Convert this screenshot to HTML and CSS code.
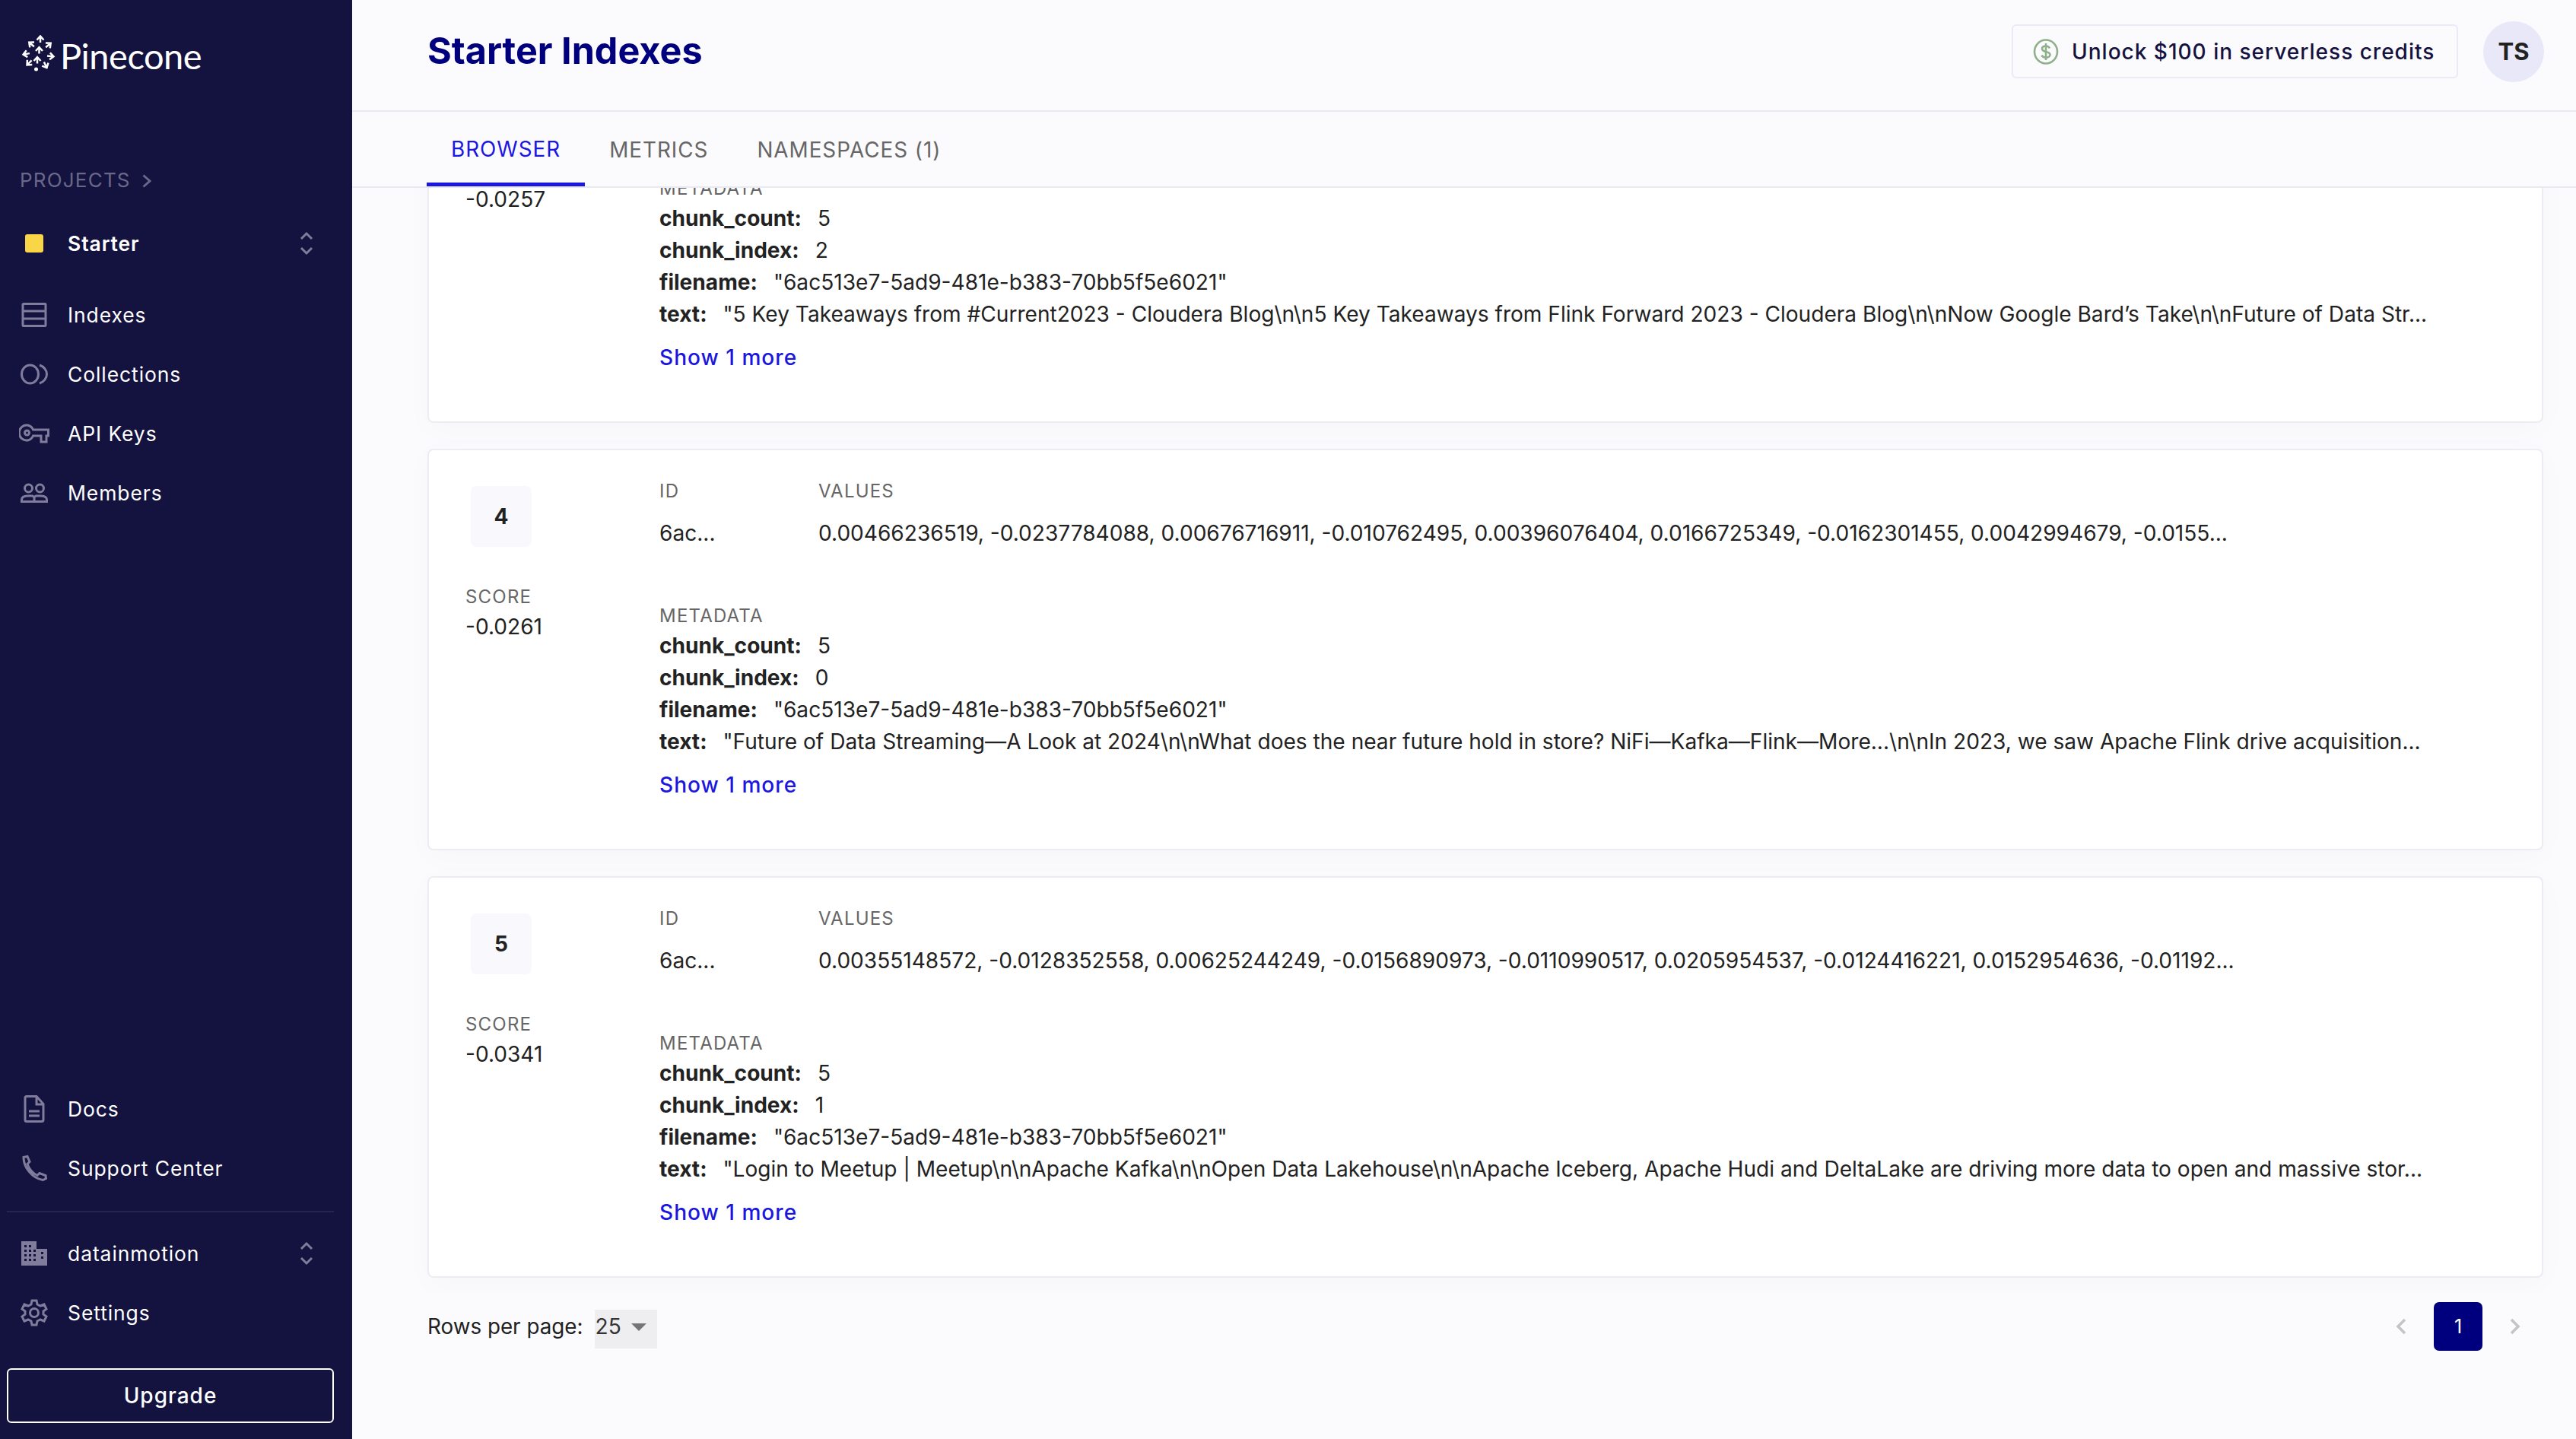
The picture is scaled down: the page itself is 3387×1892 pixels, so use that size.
FILE: index.html
```html
<!DOCTYPE html>
<html lang="en">

<head>
    <meta charset="UTF-8">
    <title>Starter Indexes</title>
    <link rel="stylesheet" href="styles.css">
</head>

<body>
    <aside class="sidebar">
        <div class="logo">
            <svg class="logo-mark" viewBox="8 10 46 50">
                <defs>
                    <path id="arr" d="M-4.5 1.5L0-3.5 4.5 1.5M0-3V5" />
                </defs>
                <g fill="none" stroke="#fff" stroke-width="2.5">
                    <use href="#arr" transform="translate(33 15)" />
                    <use href="#arr" transform="translate(21 22) rotate(-50)" />
                    <use href="#arr" transform="translate(44 23) rotate(50)" />
                    <use href="#arr" transform="translate(31.500 29.500)" />
                    <use href="#arr" transform="translate(47 38) rotate(95)" />
                    <use href="#arr" transform="translate(14 35) rotate(-100)" />
                    <use href="#arr" transform="translate(29 42.500)" />
                    <use href="#arr" transform="translate(18 47) rotate(-135)" />
                    <use href="#arr" transform="translate(40 50) rotate(155)" />
                </g>
                <circle cx="27.500" cy="55" r="2.500" fill="#fff" />
            </svg>
            <span class="logo-text">Pinecone</span>
        </div>

        <div class="projects">PROJECTS
            <svg viewBox="0 0 12 18" class="projects-arrow">
                <path d="M1.500 1.500l8.500 7.500-8.500 7.500" />
            </svg>
        </div>

        <div class="nav-item current">
            <span class="nav-icon"><span class="project-dot"></span></span>
            <span class="nav-label">Starter</span>
            <svg class="updown" viewBox="0 0 18 32">
                <path d="M2 10l7-7 7 7M2 22l7 7 7-7" />
            </svg>
        </div>

        <nav>
            <div class="nav-item">
                <span class="nav-icon">
                    <svg viewBox="0 0 36 36"><path d="M4 3.500h28a1 1 0 0 1 1 1v27a1 1 0 0 1-1 1H4a1 1 0 0 1-1-1v-27a1 1 0 0 1 1-1zM3 13h30M3 23h30" /></svg>
                </span>
                <span class="nav-label">Indexes</span>
            </div>
            <div class="nav-item">
                <span class="nav-icon">
                    <svg viewBox="0 0 36 36"><ellipse cx="12.500" cy="18" rx="11" ry="12" /><path d="M25 6c6 2 9.500 7 9.500 12s-3.500 10-9.500 12" /></svg>
                </span>
                <span class="nav-label">Collections</span>
            </div>
            <div class="nav-item">
                <span class="nav-icon">
                    <svg class="wide" viewBox="0 0 40 36"><path d="M18.500 13H38.500V21H36V29H29V21H18.500A9.500 10 0 1 1 18.500 13z" /><circle cx="10.500" cy="17" r="3" /></svg>
                </span>
                <span class="nav-label">API Keys</span>
            </div>
            <div class="nav-item">
                <span class="nav-icon">
                    <svg viewBox="0 0 36 36"><circle cx="10.500" cy="12" r="5" /><circle cx="25.500" cy="12" r="5" /><path d="M1.500 29.500v-2.500c0-3 3-5 8-5h6l2.500 1.500 2.500-1.500h6c5 0 8 2 8 5v2.500zM18 23.500v6" /></svg>
                </span>
                <span class="nav-label">Members</span>
            </div>
        </nav>

        <div class="sidebar-bottom">
            <div class="nav-item">
                <span class="nav-icon">
                    <svg viewBox="0 0 36 36"><path d="M8 1.500h13l9 10v21a2 2 0 0 1-2 2H8a2 2 0 0 1-2-2v-29a2 2 0 0 1 2-2zM21 2v10h9M11 21h14M11 27h14" /></svg>
                </span>
                <span class="nav-label">Docs</span>
            </div>
            <div class="nav-item">
                <span class="nav-icon">
                    <svg viewBox="0 0 36 36"><path d="M4 3.500l5-1 3 7-3 3c2 6 7 12 13 15l3-3 8 3 .5 4-4 2C15 31 4 17 4 3.500z" /></svg>
                </span>
                <span class="nav-label">Support Center</span>
            </div>

            <div class="divider"></div>

            <div class="nav-item">
                <span class="nav-icon">
                    <svg viewBox="0 0 36 36"><path class="solid" d="M1 2h20v10h14v22H1zM5 7v3h3V7zm6 0v3h3V7zm-6 6v3h3v-3zm6 0v3h3v-3zm6 0v3h3v-3zm-12 6v3h3v-3zm6 0v3h3v-3zm6 0v3h3v-3zm10-3v3h3v-3zm0 6v3h3v-3zm-22 3v3h3v-3zm6 0v3h3v-3zm6 0v3h3v-3z" fill-rule="evenodd" /></svg>
                </span>
                <span class="nav-label">datainmotion</span>
                <svg class="updown" viewBox="0 0 18 32">
                    <path d="M2 10l7-7 7 7M2 22l7 7 7-7" />
                </svg>
            </div>
            <div class="nav-item">
                <span class="nav-icon">
                    <svg viewBox="0 0 36 36"><circle cx="18" cy="18" r="5.500" /><path d="M15 2h6l1 5 4 2 5-2 3 6-4 3v4l4 3-3 6-5-2-4 2-1 5h-6l-1-5-4-2-5 2-3-6 4-3v-4l-4-3 3-6 5 2 4-2z" /></svg>
                </span>
                <span class="nav-label">Settings</span>
            </div>

            <button class="upgrade">Upgrade</button>
        </div>
    </aside>

    <main class="main">
        <header class="topbar">
            <h1>Starter Indexes</h1>
            <div class="topbar-right">
                <button class="credits">
                    <svg viewBox="0 0 34 34" class="credits-icon">
                        <ellipse cx="17" cy="17" rx="15" ry="15.500" />
                        <path d="M22 12.500c-1-2-3-3-5-3-3 0-5 1.500-5 3.800 0 5 10.500 2.500 10.500 7.700 0 2.200-2.500 3.600-5.500 3.600-2.500 0-4.500-1-5.500-3M17 6v22" />
                    </svg>
                    Unlock $100 in serverless credits
                </button>
                <div class="avatar">TS</div>
            </div>
        </header>

        <div class="tabs">
            <div class="tab active">BROWSER</div>
            <div class="tab">METRICS</div>
            <div class="tab">NAMESPACES (1)</div>
        </div>

        <div class="results">
            <div class="results-list">

                <!-- scrolled under the tabs, only the lower part shows -->
                <div class="card">
                    <div class="card-left">
                        <div class="rank"></div>
                        <div class="label score-label"></div>
                        <div class="score">-0.0257</div>
                    </div>
                    <div class="card-right">
                        <div class="id-row">
                            <div class="id-col">
                                <div class="label"></div>
                                <div class="value">&nbsp;</div>
                            </div>
                        </div>
                        <div class="label meta-label">METADATA</div>
                        <div class="meta"><b>chunk_count:</b>5</div>
                        <div class="meta"><b>chunk_index:</b>2</div>
                        <div class="meta"><b>filename:</b>"6ac513e7-5ad9-481e-b383-70bb5f5e6021"</div>
                        <div class="meta"><b>text:</b>"5 Key Takeaways from #Current2023 - Cloudera Blog\n\n5 Key Takeaways from Flink Forward 2023 - Cloudera Blog\n\nNow Google Bard’s Take\n\nFuture of Data Str...</div>
                        <a class="show-more">Show 1 more</a>
                    </div>
                </div>

                <div class="card">
                    <div class="card-left">
                        <div class="rank">4</div>
                        <div class="label score-label">SCORE</div>
                        <div class="score">-0.0261</div>
                    </div>
                    <div class="card-right">
                        <div class="id-row">
                            <div class="id-col">
                                <div class="label">ID</div>
                                <div class="value">6ac...</div>
                            </div>
                            <div>
                                <div class="label">VALUES</div>
                                <div class="value">0.00466236519, -0.0237784088, 0.00676716911, -0.010762495, 0.00396076404, 0.0166725349, -0.0162301455, 0.0042994679, -0.0155...</div>
                            </div>
                        </div>
                        <div class="label meta-label">METADATA</div>
                        <div class="meta"><b>chunk_count:</b>5</div>
                        <div class="meta"><b>chunk_index:</b>0</div>
                        <div class="meta"><b>filename:</b>"6ac513e7-5ad9-481e-b383-70bb5f5e6021"</div>
                        <div class="meta"><b>text:</b>"Future of Data Streaming—A Look at 2024\n\nWhat does the near future hold in store? NiFi—Kafka—Flink—More...\n\nIn 2023, we saw Apache Flink drive acquisition...</div>
                        <a class="show-more">Show 1 more</a>
                    </div>
                </div>

                <div class="card">
                    <div class="card-left">
                        <div class="rank">5</div>
                        <div class="label score-label">SCORE</div>
                        <div class="score">-0.0341</div>
                    </div>
                    <div class="card-right">
                        <div class="id-row">
                            <div class="id-col">
                                <div class="label">ID</div>
                                <div class="value">6ac...</div>
                            </div>
                            <div>
                                <div class="label">VALUES</div>
                                <div class="value">0.00355148572, -0.0128352558, 0.00625244249, -0.0156890973, -0.0110990517, 0.0205954537, -0.0124416221, 0.0152954636, -0.01192...</div>
                            </div>
                        </div>
                        <div class="label meta-label">METADATA</div>
                        <div class="meta"><b>chunk_count:</b>5</div>
                        <div class="meta"><b>chunk_index:</b>1</div>
                        <div class="meta"><b>filename:</b>"6ac513e7-5ad9-481e-b383-70bb5f5e6021"</div>
                        <div class="meta"><b>text:</b>"Login to Meetup | Meetup\n\nApache Kafka\n\nOpen Data Lakehouse\n\nApache Iceberg, Apache Hudi and DeltaLake are driving more data to open and massive stor...</div>
                        <a class="show-more">Show 1 more</a>
                    </div>
                </div>

            </div>
        </div>

        <footer class="pager">
            <div class="rows-per-page">
                <span>Rows per page:</span>
                <div class="rows-select">25<span class="caret"></span></div>
            </div>
            <div class="pages">
                <svg class="page-arrow" viewBox="0 0 14 22"><path d="M12 2l-9 9 9 9" /></svg>
                <div class="page-btn">1</div>
                <svg class="page-arrow" viewBox="0 0 14 22"><path d="M2 2l9 9-9 9" /></svg>
            </div>
        </footer>
    </main>
</body>

</html>
```

FILE: styles.css
```css
html,
body {
    height: 100%;
}

body {
    margin: 0;
    display: flex;
    overflow: hidden;
    font-family: Inter, "Liberation Sans", sans-serif;
    font-size: 28.080px;
    color: #222;
    background-color: #fbfbfe;
}

/* sidebar */

.sidebar {
    width: 463px;
    flex: none;
    display: flex;
    flex-direction: column;
    background-color: #14123f;
    color: #fff;
}

.logo {
    height: 146px;
    padding-left: 28px;
    display: flex;
    align-items: center;
    gap: 5px;
}

.logo-mark {
    width: 46px;
    height: 50px;
    margin-top: -4px;
}

.logo-text {
    font-family: Lato, sans-serif;
    font-size: 47px;
    letter-spacing: -0.5px;
}

.projects {
    height: 50px;
    margin-top: 65px;
    margin-bottom: 20px;
    padding-left: 26px;
    display: flex;
    align-items: center;
    gap: 15px;
    font-size: 26px;
    letter-spacing: 1.200px;
    color: #696889;
}

.projects-arrow {
    width: 12px;
    height: 18px;
    margin-top: 3px;
    fill: none;
    stroke: #696889;
    stroke-width: 3;
}

.nav-item {
    height: 78px;
    display: flex;
    align-items: center;
    font-size: 26.500px;
    letter-spacing: 0.900px;
}

.nav-icon {
    width: 89px;
    flex: none;
    display: flex;
    justify-content: center;
}

.nav-icon svg {
    width: 36px;
    height: 36px;
    fill: none;
    stroke: #7f7d9b;
    stroke-width: 3;
}

.nav-icon svg.wide {
    width: 40px;
}

.nav-icon svg .solid {
    fill: #7f7d9b;
    stroke: none;
}

.nav-label {
    flex: 1;
}

.current {
    font-weight: 600;
    margin-bottom: 16px;
}

.project-dot {
    width: 24px;
    height: 24px;
    border-radius: 3px;
    background-color: #f8d648;
    margin-left: 1px;
}

.updown {
    width: 18px;
    height: 32px;
    margin-right: 51px;
    fill: none;
    stroke: #7f7d9b;
    stroke-width: 3;
}

.sidebar-bottom {
    margin-top: auto;
    padding-bottom: 21px;
}

.divider {
    height: 2px;
    margin: 17px 24px 15px 9px;
    background-color: #26244f;
}

.upgrade {
    display: block;
    width: 430px;
    height: 72px;
    margin: 34px 0 0 9px;
    border: 2px solid #fff;
    border-radius: 6px;
    background: none;
    color: #fff;
    font-family: inherit;
    font-size: 28px;
    font-weight: 500;
    letter-spacing: 1px;
}

/* main column */

.main {
    flex: 1;
    min-width: 0;
    display: flex;
    flex-direction: column;
}

.topbar {
    flex: none;
    box-sizing: border-box;
    height: 147px;
    padding: 0 42px 10px 99px;
    display: flex;
    align-items: center;
    justify-content: space-between;
    border-bottom: 2px solid #e9e9f1;
}

h1 {
    margin: 0 0 2px;
    font-size: 48.500px;
    font-weight: 700;
    color: #00007f;
}

.topbar-right {
    display: flex;
    align-items: center;
    gap: 33px;
}

.credits {
    height: 71px;
    width: 587px;
    padding: 0 0 0 26px;
    display: flex;
    align-items: center;
    gap: 17px;
    border: 2px solid #ebeaf6;
    border-radius: 6px;
    background: none;
    font-family: inherit;
    font-size: 28px;
    font-weight: 500;
    letter-spacing: 1px;
    color: #15123f;
}

.credits-icon {
    width: 34px;
    height: 34px;
    fill: none;
    stroke: #8fb08a;
    stroke-width: 2.6;
}

.avatar {
    width: 80px;
    height: 80px;
    border-radius: 50%;
    display: flex;
    align-items: center;
    justify-content: center;
    background-color: #e9e8f8;
    font-size: 31px;
    font-weight: 700;
}

.tabs {
    height: 98px;
    flex: none;
    padding-left: 98px;
    display: flex;
    border-bottom: 2px solid #e9e9f1;
}

.tab {
    padding: 2px 32px 0;
    display: flex;
    align-items: center;
    font-size: 27.800px;
    letter-spacing: 1px;
    color: #666;
}

.tab.active {
    box-sizing: border-box;
    height: 98px;
    padding-top: 5px;
    color: #1c17e0;
    border-bottom: 5px solid #1c17e0;
}

.results {
    height: 1453px;
    flex: none;
    overflow: hidden;
}

.results-list {
    margin-top: -219px;
    padding: 0 43px 0 99px;
}

.card {
    height: 528px;
    margin-bottom: 34px;
    box-sizing: border-box;
    display: flex;
    border: 2px solid #ececf2;
    border-radius: 8px;
    background-color: #fff;
    box-shadow: 0 8px 40px rgba(20, 18, 63, 0.025);
}

.card-left {
    width: 303px;
    flex: none;
    padding: 47px 0 0 48px;
    box-sizing: border-box;
}

.rank {
    width: 80px;
    height: 80px;
    margin-left: 7px;
    border-radius: 8px;
    display: flex;
    align-items: center;
    justify-content: center;
    background-color: #f8f8fd;
    font-weight: 700;
}

.label {
    height: 30px;
    line-height: 31px;
    font-size: 24px;
    letter-spacing: 1.200px;
    color: #666;
}

.score-label {
    margin-top: 50px;
}

.score {
    margin-top: 4px;
    line-height: 42px;
}

.card-right {
    flex: 1;
    padding-top: 38px;
}

.id-row {
    display: flex;
}

.id-col {
    width: 209px;
    flex: none;
}

.value {
    margin-top: 20px;
    line-height: 42px;
}

.meta-label {
    margin-top: 72px;
    margin-bottom: 4px;
}

.meta {
    line-height: 42px;
    white-space: nowrap;
}

.meta b {
    font-weight: 700;
    margin-right: 21px;
}

.show-more {
    display: block;
    margin-top: 15px;
    line-height: 42px;
    font-weight: 500;
    letter-spacing: 1px;
    color: #1c17e0;
}

/* pager */

.pager {
    flex: 1;
    padding: 12px 73px 0 99px;
    display: flex;
    justify-content: space-between;
    align-items: flex-start;
}

.rows-per-page {
    display: flex;
    gap: 15px;
    margin-top: 10px;
    height: 51px;
}

.rows-per-page span:first-child {
    line-height: 44px;
    font-size: 27.800px;
}

.rows-select {
    width: 82px;
    height: 51px;
    box-sizing: border-box;
    padding-left: 1px;
    line-height: 44px;
    position: relative;
    background-color: #eeeef0;
    color: #333;
}

.caret {
    position: absolute;
    right: 14px;
    top: 18px;
    border-left: 10px solid transparent;
    border-right: 10px solid transparent;
    border-top: 10px solid #757575;
}

.pages {
    display: flex;
    align-items: center;
    gap: 36px;
}

.page-arrow {
    width: 14px;
    height: 22px;
    fill: none;
    stroke: #c4c4c4;
    stroke-width: 3.500;
}

.page-btn {
    width: 64px;
    height: 64px;
    border-radius: 7px;
    display: flex;
    align-items: center;
    justify-content: center;
    background-color: #00007f;
    color: #fff;
    font-size: 25px;
}
```
